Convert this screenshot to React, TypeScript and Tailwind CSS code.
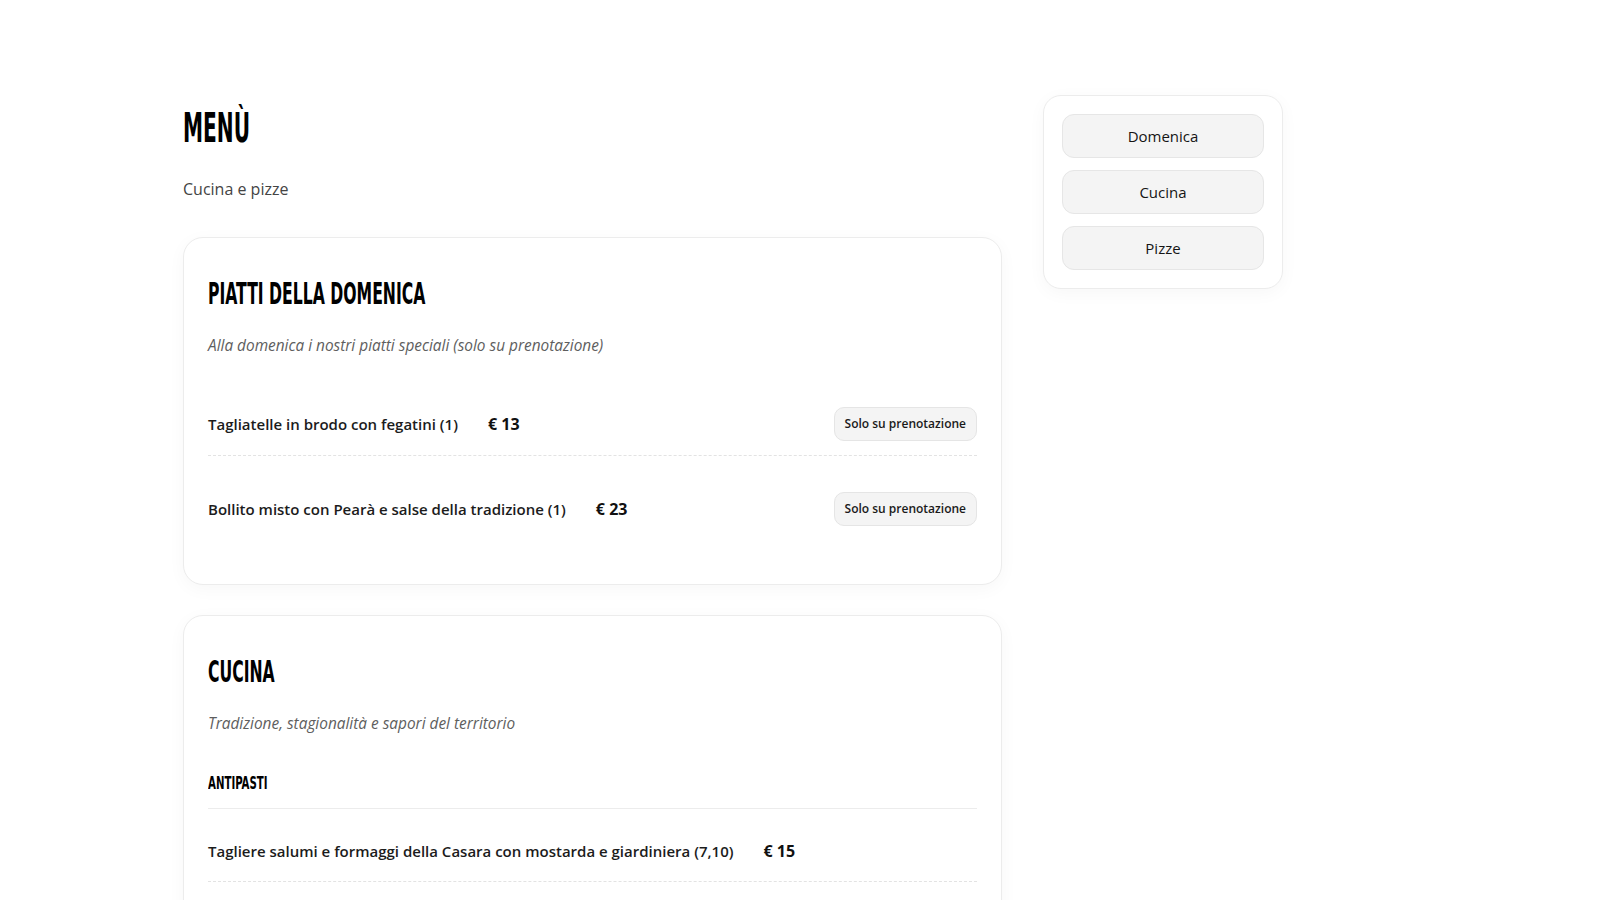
import React from 'react';

type Dish = {
  name: string;
  price: string;
  note?: string;
};

type Category = {
  title?: string;
  dishes: Dish[];
};

type Section = {
  id: string;
  title: string;
  subtitle: string;
  categories: Category[];
};

const sections: Section[] = [
  {
    id: 'domenica',
    title: 'Piatti della domenica',
    subtitle: 'Alla domenica i nostri piatti speciali (solo su prenotazione)',
    categories: [
      {
        dishes: [
          { name: 'Tagliatelle in brodo con fegatini (1)', price: '€ 13', note: 'Solo su prenotazione' },
          { name: 'Bollito misto con Pearà e salse della tradizione (1)', price: '€ 23', note: 'Solo su prenotazione' },
        ],
      },
    ],
  },
  {
    id: 'cucina',
    title: 'Cucina',
    subtitle: 'Tradizione, stagionalità e sapori del territorio',
    categories: [
      {
        title: 'Antipasti',
        dishes: [
          { name: 'Tagliere salumi e formaggi della Casara con mostarda e giardiniera (7,10)', price: '€ 15' },
          { name: 'Carne salada con rucola e scaglie di Monte Veronese (7)', price: '€ 13' },
          { name: 'Polenta abbrustolita con sopressa e funghi trifolati', price: '€ 12' },
        ],
      },
    ],
  },
];

const navItems = ['Domenica', 'Cucina', 'Pizze'];

// condensed display face for titles, squeezed to mimic a narrow poster font
const headingFont = "font-['Liberation_Sans_Narrow','DejaVu_Sans_Condensed',sans-serif] font-bold uppercase text-black inline-block origin-left";

const DishRow = ({ dish, last }: { dish: Dish; last: boolean }) => (
  <div
    className={`flex items-center justify-between py-[14px] min-h-[61px] ${
      last ? '' : 'border-b border-dashed border-[#e3e3e3] mb-[22px]'
    }`}
  >
    <div className="flex items-center gap-[30px]">
      <span className="text-[15px] font-semibold text-[#1c1c1c]">{dish.name}</span>
      <span className="text-[16px] font-bold text-[#111] whitespace-nowrap">{dish.price}</span>
    </div>
    {dish.note && (
      <span className="px-[10px] py-[6px] rounded-[10px] border border-[#e5e5e5] bg-[#f4f4f4] text-[12px] font-semibold text-[#1a1a1a] leading-[20px]">
        {dish.note}
      </span>
    )}
  </div>
);

const MenuCard = ({ section }: { section: Section }) => (
  <section className="rounded-[20px] border border-[#ececec] bg-white shadow-[0_4px_18px_rgba(0,0,0,0.035)] px-6 pt-[38px] pb-[44px]">
    <h2 className={`${headingFont} text-[30px] leading-[36px] scale-x-[0.58]`}>{section.title}</h2>
    <p className="mt-[22px] mb-[35px] text-[15.4px] leading-[24px] italic text-[#5e5e5e]">{section.subtitle}</p>
    {section.categories.map((cat, ci) => (
      <div key={ci}>
        {cat.title && (
          <div className="pb-[13px] mb-[12px] border-b border-[#ececec]">
            <h3 className={`${headingFont} text-[18px] leading-[22px] scale-x-[0.63]`}>{cat.title}</h3>
          </div>
        )}
        {cat.dishes.map((dish, di) => (
          <DishRow key={dish.name} dish={dish} last={di === cat.dishes.length - 1 && ci === section.categories.length - 1} />
        ))}
      </div>
    ))}
  </section>
);

export default function App() {
  return (
    <div className="min-h-screen bg-white font-['Open_Sans','Noto_Sans',sans-serif] text-[#111]">
      <div className="flex items-start gap-[41px] pl-[183px] pt-[95px] pb-20">
        <main className="w-[819px] mt-[9px]">
          <h1 className={`${headingFont} text-[40px] leading-[48px] scale-x-[0.56]`}>Menù</h1>
          <p className="mt-[24px] text-[16px] leading-[26px] text-[#444]">Cucina e pizze</p>
          <div className="mt-[35px] flex flex-col gap-[30px]">
            {sections.map((s) => (
              <MenuCard key={s.id} section={s} />
            ))}
          </div>
        </main>
        <aside className="w-[240px] rounded-[18px] border border-[#ececec] bg-white shadow-[0_4px_18px_rgba(0,0,0,0.035)] p-[18px] flex flex-col gap-3">
          {navItems.map((item) => (
            <button
              key={item}
              type="button"
              className="h-11 rounded-xl border border-[#e6e6e6] bg-[#f4f4f4] text-[15px] font-medium text-[#151515]"
            >
              {item}
            </button>
          ))}
        </aside>
      </div>
    </div>
  );
}
